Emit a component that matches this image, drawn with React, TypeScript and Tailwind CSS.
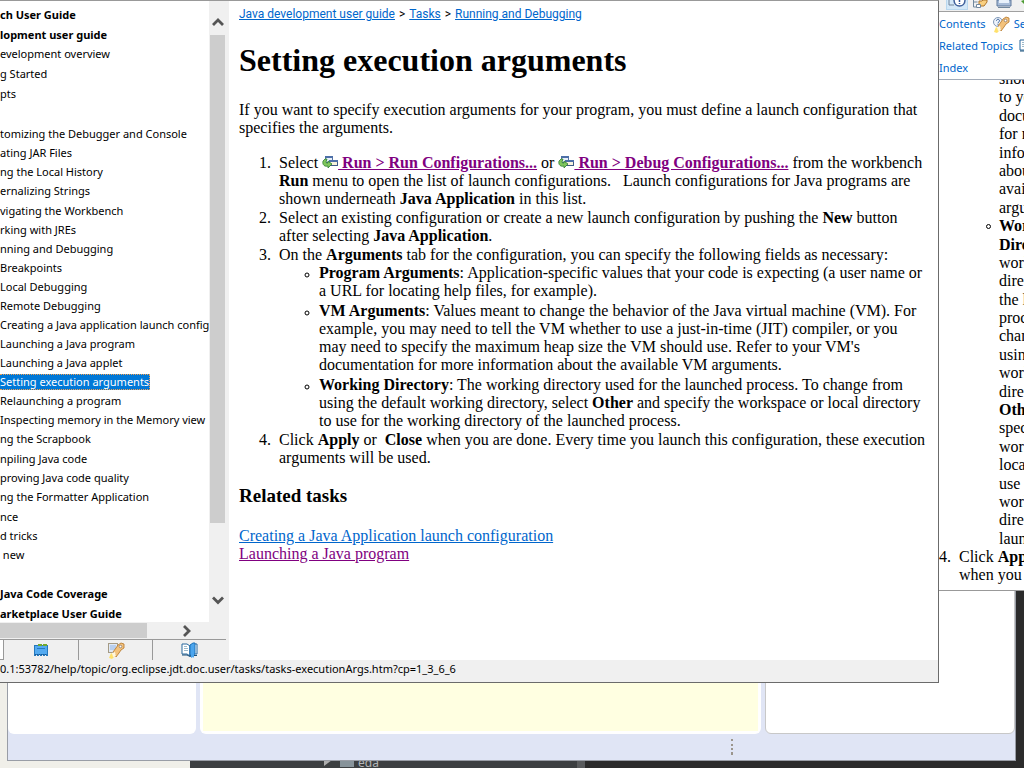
import React from "react";

type Row = { text: string; tall?: boolean; bold?: boolean; selected?: boolean };

const rows: Row[] = [
  { text: "ch User Guide", tall: true, bold: true },
  { text: "lopment user guide", bold: true },
  { text: "evelopment overview", tall: true },
  { text: "g Started", tall: true },
  { text: "pts", tall: true },
  { text: "", tall: true },
  { text: "tomizing the Debugger and Console" },
  { text: "ating JAR Files" },
  { text: "ng the Local History" },
  { text: "ernalizing Strings", tall: true },
  { text: "vigating the Workbench" },
  { text: "rking with JREs" },
  { text: "nning and Debugging" },
  { text: "Breakpoints" },
  { text: "Local Debugging" },
  { text: "Remote Debugging" },
  { text: "Creating a Java application launch configuration" },
  { text: "Launching a Java program" },
  { text: "Launching a Java applet" },
  { text: "Setting execution arguments", selected: true },
  { text: "Relaunching a program" },
  { text: "Inspecting memory in the Memory view" },
  { text: "ng the Scrapbook", tall: true },
  { text: "npiling Java code" },
  { text: "proving Java code quality" },
  { text: "ng the Formatter Application", tall: true },
  { text: "nce" },
  { text: "d tricks" },
  { text: " new" },
  { text: "", tall: true },
  { text: "Java Code Coverage", tall: true, bold: true },
  { text: "arketplace User Guide", tall: true, bold: true },
];

const narrowLines: React.ReactNode[] = [
  "should use. Refer",
  "to your VM's",
  "documentation",
  "for more",
  "information",
  "about the",
  "available VM",
  "arguments.",
  <b>Working</b>,
  <><b>Directory</b>: The</>,
  "working",
  "directory used for",
  "the launched",
  "process. To",
  "change from",
  "using the default",
  "working",
  "directory, select",
  <><b>Other</b> and</>,
  "specify the",
  "workspace or",
  "local directory to",
  "use for the",
  "working",
  "directory of the",
  "launched process.",
];

function Chevron({ d }: { d: string }) {
  return (
    <svg width="12" height="12" viewBox="0 0 12 12" fill="none" stroke="#555" strokeWidth="2.8">
      <path d={d} />
    </svg>
  );
}

function LaunchIcon() {
  return (
    <svg className="inline-block align-baseline" width="16" height="13" viewBox="0 0 16 13">
      <rect x="3.5" y="1.5" width="7" height="6" fill="#e8f0fa" stroke="#5673a6" />
      <rect x="3" y="1" width="8" height="2" fill="#4d6fa8" />
      <rect x="7.5" y="5.5" width="8" height="5" fill="#f7f3dc" stroke="#3f5b86" />
      <rect x="7" y="5" width="9" height="2" fill="#4d6fa8" />
      <path d="M1 6l2-2h2L4 7c0 1 1 1 2 1V6l4 3-4 4v-2C3 12 0 10 1 6z" fill="#7fc65c" stroke="#2e7d32" strokeWidth=".8" />
    </svg>
  );
}

function ContentsIcon() {
  return (
    <svg width="16" height="16" viewBox="0 0 16 16">
      <rect x="1.5" y="3.5" width="13" height="9" fill="#54aaf0" stroke="#2678bd" />
      <path d="M5 2h4v2H5zM10 2h4v2h-4z" fill="#74a82c" />
      <path d="M4 6.5h8" stroke="#247bc4" />
      <path d="M2 12.5h12" stroke="#195b96" strokeDasharray="1 1" />
      <path d="M1 13.500h14" stroke="#2678bd" strokeDasharray="2 1" />
    </svg>
  );
}

function RocketIcon({ help = false }: { help?: boolean }) {
  return (
    <svg width="18" height="17" viewBox="0 0 18 17">
      {help ? (
        <>
          <circle cx="6" cy="6" r="4.5" fill="#edf3fb" stroke="#8299b8" />
          <path d="M4.5 4.800C4.500 2.800 7.500 2.800 7.500 4.800 7.500 6 6 5.800 6 7.300M6 8.200v1" fill="none" stroke="#315c98" />
        </>
      ) : (
        <>
          <rect x="1.500" y="1.500" width="9" height="9" fill="#dfe9f7" stroke="#a59b85" />
          <path d="M3 3h6v5H3z" fill="#b9cfee" />
        </>
      )}
      <path d="M2 16l2-5 4 3-3 3z" fill="#ffe16b" />
      <path d="M6 10l3-4 2-3 3-2 3 1v4l-3 2-2 3-3 4-1-3z" fill="#f3c27c" stroke="#b57526" strokeWidth=".8" />
      <circle cx="13.500" cy="4.500" r="1.300" fill="#fff" stroke="#7c6d65" strokeWidth=".7" />
      <path d="M5 11l3-1 1 4-3 1z" fill="#fff8df" />
    </svg>
  );
}

function BookIcon() {
  return (
    <svg width="17" height="16" viewBox="0 0 17 16">
      <path d="M1 2h5l3 2v10l-3-2H1zM16 2h-4L9 4v10l3-2h4z" fill="#fff" stroke="#28699d" />
      <path d="M3 4.500h3M3 6.500h4M3 8.500h4" stroke="#9cb9cb" />
      <path d="M9 3l3-2h2v11l-3 1H9z" fill="#4ca5ed" stroke="#1c72ba" />
      <path d="M1 13h5l3 1.500 2-1h5" fill="none" stroke="#194e79" />
      <path d="M10 12v4l2-1 1 1v-4z" fill="#4ca5ed" />
    </svg>
  );
}

function ToolbarIcons() {
  return (
    <div className="flex h-2.5 gap-1 overflow-hidden pl-[7px]">
      <button aria-label="Help" className="h-2.5 w-[22px] shrink-0 border border-t-0 border-[#b9d7ee] bg-[#d4e8f8]">
        <svg width="20" height="9" viewBox="0 0 20 9">
          <path d="M2 0v5h5" fill="none" stroke="#72849b" />
          <path d="M7 0c0 8 11 8 11 0" fill="#fff" stroke="#3e5f9b" strokeWidth="1.500" />
          <path d="M12.500 0v2M12.500 3v1" stroke="#31559a" strokeWidth="1.500" />
        </svg>
      </button>
      <button aria-label="Show in contents" className="mr-1 shrink-0">
        <svg width="16" height="10" viewBox="0 0 16 10">
          <path d="M1.500 0v7h3M1.500 2h4" fill="none" stroke="#71889e" />
          <path d="M7 1h3l1-1h4v2l-3 4H9l-2-2z" fill="#f9cf80" stroke="#ae752b" />
          <path d="M4.500 4.500h4v3h-4z" fill="#fff" stroke="#71889e" />
        </svg>
      </button>
      <button aria-label="Print" className="mr-1 shrink-0">
        <svg width="16" height="10" viewBox="0 0 16 10">
          <path d="M1 0h14v6H1z" fill="#a8bcd8" stroke="#5f789b" />
          <path d="M3 0h10v3H3z" fill="#e8f1fb" />
          <path d="M2 7.500h12" stroke="#71879d" />
        </svg>
      </button>
      <button aria-label="Go" className="shrink-0">
        <svg width="16" height="10" viewBox="0 0 16 10"><path d="M1 1l3-1h9v4H4z" fill="#4b9b30" /></svg>
      </button>
    </div>
  );
}

function Desktop() {
  return (
    <div className="absolute inset-x-0 bottom-0 flex h-2 overflow-hidden bg-[#2b2b2b]">
      <div className="w-[190px] bg-[#f0efe9]" />
      <div className="flex w-[387px] items-start bg-[#3c3f41] pl-[134px] font-['Noto_Sans'] text-xs leading-[6px] text-[#b3b5b7]">
        <svg width="8" height="8" viewBox="0 0 8 8"><path d="M0 0h8L0 6z" fill="#adadad" /></svg>
        <div className="ml-2 h-[7px] w-3.5 bg-[#87939a]" />
        <span className="ml-1">eda</span>
      </div>
      <div className="w-2 bg-[#595b5d]" />
    </div>
  );
}

function Workbench() {
  return (
    <div className="absolute bottom-[7px] left-[7px] right-2 top-[500px] flex flex-col border border-[#999da6] bg-[#e0e5f5]">
      <div className="flex grow gap-1">
        <div className="w-[188px] shrink-0 rounded-b-md bg-white" />
        <div className="grow rounded-b-md bg-white px-[3px] pb-[3px]">
          <div className="h-full bg-[#ffffe1]" />
        </div>
        <div className="w-[250px] shrink-0 rounded-b-md border border-[#c8c8c8] bg-white" />
      </div>
      <div className="flex h-[26px] shrink-0 justify-end pr-[282px] pt-[5px]">
        <svg width="2" height="17" viewBox="0 0 2 17">
          <path d="M1 0v2M1 5v2M1 9v2M1 13v3" stroke="#9b958c" strokeWidth="2" />
        </svg>
      </div>
    </div>
  );
}

function HelpView() {
  return (
    <aside className="absolute -right-[100px] top-0 flex h-[591px] w-[185px] flex-col overflow-hidden border-b border-[#999] bg-white">
      <div className="h-3 shrink-0 border-b border-[#a0a0a0] bg-[#f0f0f0]">
        <ToolbarIcons />
      </div>
      <nav className="flex h-[68px] shrink-0 flex-col whitespace-nowrap border-b border-[#a2abb8] pt-px font-['Noto_Sans',sans-serif] text-[11px] leading-[22px] text-[#0066cc]">
        <div className="flex items-center gap-1.5">
          <a href="#contents">Contents</a>
          <span className="flex items-center gap-1"><RocketIcon help /><a href="#search">Search</a></span>
        </div>
        <div className="flex items-center gap-1.5">
          <a href="#related">Related Topics</a>
          <BookIcon />
        </div>
        <a href="#index">Index</a>
      </nav>
      <div className="flex grow flex-col overflow-hidden whitespace-nowrap font-['Liberation_Serif',serif] text-base leading-[18px] text-black">
        <div className="-mt-2.5 flex h-[478px] shrink-0 flex-col justify-between pl-[60px]">
          {narrowLines.map((line, i) => (
            <div key={i} className="relative h-[18px]">
              {i === 8 && (
                <span className="absolute -left-[13px] top-[7px] size-[5px] rounded-full border border-black" />
              )}
              {line}
            </div>
          ))}
        </div>
        <div className="flex">
          <span className="w-5">4.</span>
          <p>Click <b>Apply</b> or<br />when you are done.</p>
        </div>
      </div>
    </aside>
  );
}

function Sidebar() {
  return (
    <div className="flex w-[229px] shrink-0 flex-col bg-[#f0f0f0]">
      <div className="flex h-[621px]">
        <ul className="w-[209px] overflow-hidden whitespace-pre bg-white pt-1 font-['Noto_Sans',sans-serif] text-[11px] text-black">
          {rows.map((row, i) => (
            <li key={i} className={row.tall ? "flex h-5 items-center" : "flex h-[19px] items-center"}>
              <span
                className={
                  row.selected
                    ? "border border-l-0 border-dotted border-[#f5a050] bg-[#0078d7] leading-[14px] text-white"
                    : row.bold
                      ? "font-bold leading-4"
                      : "leading-4"
                }
              >
                {row.text}
              </span>
            </li>
          ))}
        </ul>
        <div className="flex w-[17px] flex-col items-center justify-between pb-4 pt-[15px]">
          <button aria-label="Scroll up" className="h-3"><Chevron d="M1 9L6 4l5 5" /></button>
          <div className="mb-auto mt-[7px] h-[488px] w-[15px] bg-[#cdcdcd]" />
          <button aria-label="Scroll down" className="h-3"><Chevron d="M1 3.500L6 8.500l5-5" /></button>
        </div>
      </div>
      <div className="flex h-[17px] items-center">
        <div className="h-[15px] w-[147px] bg-[#cdcdcd]" />
        <button aria-label="Scroll right" className="ml-[34px]"><Chevron d="M3 1l5 5-5 5" /></button>
      </div>
      <div className="mr-[3px] flex h-[21px] border-t border-[#999]">
        <div className="w-1 border-b border-r border-[#999] bg-white" />
        <button aria-label="Contents" className="flex w-[75px] items-center justify-center border-r border-[#999]"><ContentsIcon /></button>
        <button aria-label="Search results" className="flex w-[74px] items-center justify-center border-r border-[#999]"><RocketIcon /></button>
        <button aria-label="Bookmarks" className="flex grow items-center justify-center"><BookIcon /></button>
      </div>
    </div>
  );
}

function Article() {
  const link = "text-[#0066cc] underline";
  const visited = "text-[#800080] underline";
  return (
    <main className="grow overflow-hidden bg-white pl-2.5 pr-3 font-['Liberation_Serif',serif] text-base leading-[18px] text-black">
      <nav className="flex gap-1 pt-[5px] font-['Roboto',sans-serif] text-xs leading-4">
        <a href="#guide" className={link}>Java development user guide</a>
        <span>&gt;</span>
        <a href="#tasks" className={link}>Tasks</a>
        <span>&gt;</span>
        <a href="#running" className={link}>Running and Debugging</a>
      </nav>
      <h1 className="mt-5 text-[32px] font-bold leading-[37px]">Setting execution arguments</h1>
      <p className="mt-[22px]">
        If you want to specify execution arguments for your program, you must define a launch configuration that
        specifies the arguments.
      </p>
      <ol className="mt-[17px] list-decimal space-y-px pl-9">
        <li className="pl-1">
          Select <LaunchIcon /><a href="#run" className={visited}><b> Run &gt; Run Configurations...</b></a> or{" "}
          <LaunchIcon /><a href="#debug" className={visited}><b> Run &gt; Debug Configurations...</b></a> from the
          workbench <b>Run</b> menu to open the list of launch configurations. &nbsp; Launch configurations for Java
          programs are shown underneath <b>Java Application</b> in this list.
        </li>
        <li className="pl-1">
          Select an existing configuration or create a new launch configuration by pushing the <b>New</b> button after
          selecting <b>Java Application</b>.
        </li>
        <li className="pl-1">
          On the <b>Arguments</b> tab for the configuration, you can specify the following fields as necessary:
          <ul className="list-[circle] space-y-0.5 pl-10 marker:text-xs">
            <li>
              <b>Program Arguments</b>: Application-specific values that your code is expecting (a user name or a URL
              for locating help files, for example).
            </li>
            <li>
              <b>VM Arguments</b>: Values meant to change the behavior of the Java virtual machine (VM). For example,
              you may need to tell the VM whether to use a just-in-time (JIT) compiler, or you may need to specify the
              maximum heap size the VM should use. Refer to your VM's documentation for more information about the
              available VM arguments.
            </li>
            <li>
              <b>Working Directory</b>: The working directory used for the launched process. To change from using the
              default working directory, select <b>Other</b> and specify the workspace or local directory to use for
              the working directory of the launched process.
            </li>
          </ul>
        </li>
        <li className="pl-1">
          Click <b>Apply</b> or&nbsp; <b>Close</b> when you are done. Every time you launch this configuration, these
          execution arguments will be used.
        </li>
      </ol>
      <h2 className="mt-[18px] text-[19px] font-bold leading-[22px]">Related tasks</h2>
      <p className="mt-5">
        <a href="#creating" className={link}>Creating a Java Application launch configuration</a>
        <br />
        <a href="#launching" className={visited}>Launching a Java program</a>
      </p>
    </main>
  );
}

export default function App() {
  return (
    <div className="relative h-screen overflow-hidden bg-[linear-gradient(90deg,#f0efe9_50%,#2b2b2b_50%)]">
      <Desktop />
      <Workbench />
      <HelpView />
      <section className="absolute left-0 right-[85px] top-0 flex flex-col border-b border-r border-t border-[#6b6b6b] border-t-[#999] bg-white">
        <div className="flex">
          <Sidebar />
          <Article />
        </div>
        <footer className="h-[22px] bg-[#f0f0f0] font-['Noto_Sans',sans-serif] text-[11px] leading-[18px] text-black">
          0.1:53782/help/topic/org.eclipse.jdt.doc.user/tasks/tasks-executionArgs.htm?cp=1_3_6_6
        </footer>
      </section>
    </div>
  );
}
